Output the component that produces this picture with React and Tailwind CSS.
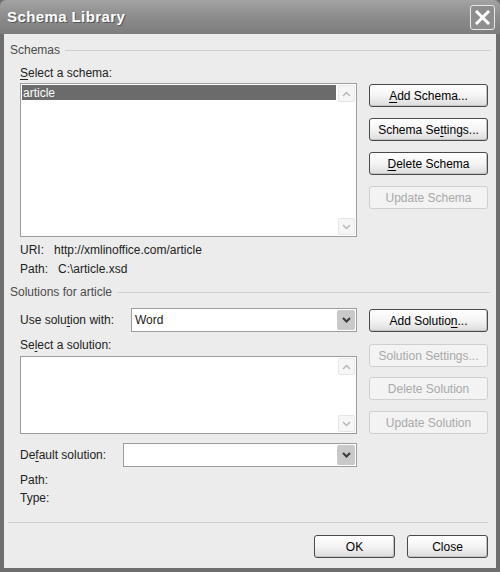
import React from 'react';

const font = { fontFamily: '"Liberation Sans", Arial, sans-serif' };

function U({ children }) {
  return <span className="underline underline-offset-2">{children}</span>;
}

function Btn({ children, disabled, width = 'w-[119px]', className = '' }) {
  return (
    <div
      className={
        'h-[23px] flex items-center justify-center rounded-[3px] border text-[12px] ' +
        width +
        ' ' +
        (disabled
          ? 'border-[#cfcfcf] bg-[#f3f3f3] text-[#a9a9a9]'
          : 'border-[#4a4a4a] bg-gradient-to-b from-[#ffffff] via-[#f4f4f4] to-[#dcdcdc] text-black shadow-[inset_-1px_-1px_0_#c4c4c4]') +
        ' ' +
        className
      }
    >
      {children}
    </div>
  );
}

function Chevron({ up, dark }) {
  return (
    <svg width="9" height="6" viewBox="0 0 9 6">
      <path
        d={up ? 'M1 5 L4.5 1.5 L8 5' : 'M1 1 L4.5 4.5 L8 1'}
        fill="none"
        stroke={dark ? '#3a3a3a' : '#b8b8b8'}
        strokeWidth={dark ? 2 : 1.5}
      />
    </svg>
  );
}

function ListBox({ height, children }) {
  return (
    <div className={'flex border border-[#9c9c9c] bg-white ' + height}>
      <div className="flex-1 p-[1px]">{children}</div>
      <div className="w-[19px] flex flex-col justify-between p-[1px]">
        <div className="h-[17px] flex items-center justify-center rounded-[2px] border border-[#e6e6e6] bg-[#f6f6f6]">
          <Chevron up />
        </div>
        <div className="h-[17px] flex items-center justify-center rounded-[2px] border border-[#e6e6e6] bg-[#f6f6f6]">
          <Chevron />
        </div>
      </div>
    </div>
  );
}

function Combo({ width, value }) {
  return (
    <div className={'h-[24px] flex border border-[#9c9c9c] bg-white ' + width}>
      <div className="flex-1 flex items-center pl-[3px] text-[12px]">{value}</div>
      <div className="w-[18px] m-[1px] flex items-center justify-center rounded-[2px] bg-[#c9c9c9]">
        <Chevron dark />
      </div>
    </div>
  );
}

function GroupHead({ children }) {
  return (
    <div className="h-[16px] flex items-center pl-[6px] pr-[6px] text-[12px] text-[#4a4a4a]">
      <span>{children}</span>
      <div className="flex-1 ml-[5px] h-px bg-[#cdcdcd]" />
    </div>
  );
}

export default function App() {
  return (
    <div style={font} className="w-[500px] h-[572px] flex flex-col bg-[#6f6f6f]">
      <div className="h-[34px] flex items-center justify-between pl-[7px] pr-[5px] rounded-t-[6px] bg-gradient-to-b from-[#a3a3a3] via-[#8c8c8c] to-[#7d7d7d]">
        <span className="text-[15px] font-bold tracking-[0.4px] text-white [text-shadow:1px_1px_0_#555]">
          Schema Library
        </span>
        <div className="w-[25px] h-[25px] flex items-center justify-center rounded-[3px] border border-[#e8e8e8] bg-[#8e8e8e]">
          <svg width="15" height="15" viewBox="0 0 15 15">
            <path d="M2 2 L13 13 M13 2 L2 13" stroke="#fff" strokeWidth="3" strokeLinecap="square" />
          </svg>
        </div>
      </div>

      <div className="flex-1 mx-[4px] mb-[4px] flex flex-col bg-[#ececec] pt-[8px] text-[12px] text-[#222]">
        <GroupHead>Schemas</GroupHead>

        <div className="flex mt-[7px] pl-[16px]">
          <div className="w-[337px] flex flex-col">
            <div className="h-[16px] leading-[16px]">
              <U>S</U>elect a schema:
            </div>
            <div className="mt-[2px]">
              <ListBox height="h-[154px]">
                <div className="h-[15px] flex items-center pl-[1px] bg-[#6b6b6b] text-white">article</div>
              </ListBox>
            </div>
          </div>
          <div className="ml-[12px] pt-[19px] flex flex-col gap-[11px]">
            <Btn>
              <U>A</U>dd Schema...
            </Btn>
            <Btn>
              Schema Se<U>t</U>tings...
            </Btn>
            <Btn>
              <U>D</U>elete Schema
            </Btn>
            <Btn disabled>Update Schema</Btn>
          </div>
        </div>

        <div className="pl-[16px] mt-[3px]">
          <div className="h-[19px] flex items-center">
            <span className="w-[34px]">URI:</span>
            <span>http://xmlinoffice.com/article</span>
          </div>
          <div className="h-[19px] flex items-center">
            <span className="w-[38px]">Path:</span>
            <span>C:\article.xsd</span>
          </div>
        </div>

        <div className="mt-[6px]">
          <GroupHead>Solutions for article</GroupHead>
        </div>

        <div className="flex mt-[8px] pl-[16px]">
          <div className="w-[337px] flex flex-col">
            <div className="flex items-center">
              <span className="w-[111px]">
                Use solu<U>t</U>ion with:
              </span>
              <Combo width="w-[226px]" value="Word" />
            </div>
            <div className="mt-[5px] h-[16px] leading-[16px]">
              Se<U>l</U>ect a solution:
            </div>
            <div className="mt-[3px]">
              <ListBox height="h-[78px]" />
            </div>
            <div className="mt-[9px] flex items-center">
              <span className="w-[103px]">
                De<U>f</U>ault solution:
              </span>
              <Combo width="w-[234px]" value="" />
            </div>
            <div className="mt-[4px] h-[18px] flex items-center">Path:</div>
            <div className="h-[18px] flex items-center">Type:</div>
          </div>
          <div className="ml-[12px] pt-[1px] flex flex-col">
            <Btn>
              Add Solutio<U>n</U>...
            </Btn>
            <Btn disabled className="mt-[12px]">
              Solution Settings...
            </Btn>
            <Btn disabled className="mt-[10px]">
              Delete Solution
            </Btn>
            <Btn disabled className="mt-[11px]">
              Update Solution
            </Btn>
          </div>
        </div>

        <div className="mt-[15px] ml-[4px] mr-[8px] h-px bg-[#cdcdcd]" />

        <div className="mt-[12px] mr-[8px] flex justify-end gap-[12px]">
          <Btn width="w-[81px]">OK</Btn>
          <Btn width="w-[81px]">Close</Btn>
        </div>
      </div>
    </div>
  );
}
